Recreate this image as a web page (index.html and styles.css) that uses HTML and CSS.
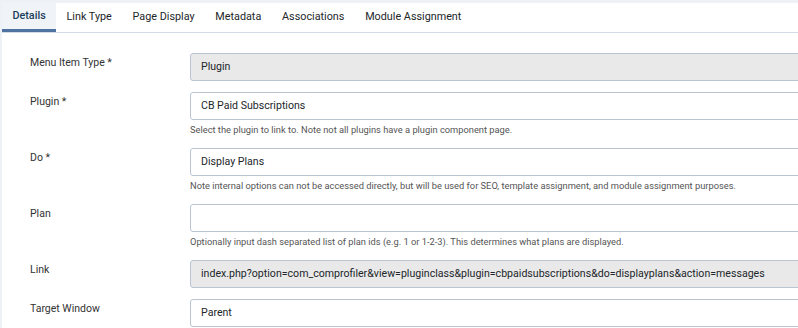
FILE: index.html
```html
<!DOCTYPE html>
<html lang="en">
<head>
  <meta charset="UTF-8">
  <title>Menu Item - Details</title>
  <link rel="stylesheet" href="styles.css">
</head>
<body>
  <div class="page">
    <!-- Tabs -->
    <div class="tabs">
      <div class="tab active">Details</div>
      <div class="tab">Link Type</div>
      <div class="tab">Page Display</div>
      <div class="tab">Metadata</div>
      <div class="tab">Associations</div>
      <div class="tab">Module Assignment</div>
    </div>

    <!-- Form -->
    <div class="form">
      <div class="row">
        <label class="label">Menu Item Type *</label>
        <div class="control">
          <div class="input disabled">Plugin</div>
        </div>
      </div>
      <div class="row">
        <label class="label">Plugin *</label>
        <div class="control">
          <div class="input">CB Paid Subscriptions</div>
          <div class="help">Select the plugin to link to. Note not all plugins have a plugin component page.</div>
        </div>
      </div>
      <div class="row">
        <label class="label">Do *</label>
        <div class="control">
          <div class="input">Display Plans</div>
          <div class="help">Note internal options can not be accessed directly, but will be used for SEO, template assignment, and module assignment purposes.</div>
        </div>
      </div>
      <div class="row">
        <label class="label">Plan</label>
        <div class="control">
          <div class="input"></div>
          <div class="help">Optionally input dash separated list of plan ids (e.g. 1 or 1-2-3). This determines what plans are displayed.</div>
        </div>
      </div>
      <div class="row">
        <label class="label">Link</label>
        <div class="control">
          <div class="input disabled">index.php?option=com_comprofiler&amp;view=pluginclass&amp;plugin=cbpaidsubscriptions&amp;do=displayplans&amp;action=messages</div>
        </div>
      </div>
      <div class="row">
        <label class="label">Target Window</label>
        <div class="control">
          <div class="input">Parent</div>
        </div>
      </div>
    </div>
  </div>
</body>
</html>
```

FILE: styles.css
```css
body {
  margin: 0;
  padding: 0;
  font-family: Roboto, "Liberation Sans", Arial, sans-serif;
  color: #22262a;
  background-color: #eef2f6;
  overflow: hidden;
}

.page {
  margin-top: 3px;
  margin-left: 2px;
  background-color: #fff;
  height: 325px;
}

/* tabs */
.tabs {
  display: flex;
  height: 29px;
  border-bottom: 1px solid #d3dce6;
}
.tab {
  padding: 0 10.4px;
  font-size: 10.8px;
  line-height: 28px;
  color: #22262a;
  white-space: nowrap;
}
.tab.active {
  background-color: #f0f4f8;
  color: #1c3d5a;
  font-weight: 500;
  border-bottom: 3px solid #4f73a0;
  line-height: 26px;
}

/* form */
.form {
  padding: 20px 0 0 28px;
}
.row {
  display: flex;
  margin-bottom: 11px;
}
.label {
  width: 160px;
  flex-shrink: 0;
  font-size: 10.5px;
  line-height: 20px;
  color: #333;
}
.control {
  flex: 1;
  min-width: 0;
}
.input {
  height: 26px;
  margin-right: -30px;
  border: 1px solid #b9c5d3;
  border-radius: 3px;
  padding: 0 10px;
  font-size: 10.6px;
  line-height: 26px;
  color: #22262a;
  background-color: #fff;
  white-space: nowrap;
  overflow: hidden;
}
.input.disabled {
  background-color: #e9e9e9;
}
.help {
  margin-top: 3px;
  font-size: 9.3px;
  line-height: 14px;
  color: #555;
  white-space: nowrap;
}
```
